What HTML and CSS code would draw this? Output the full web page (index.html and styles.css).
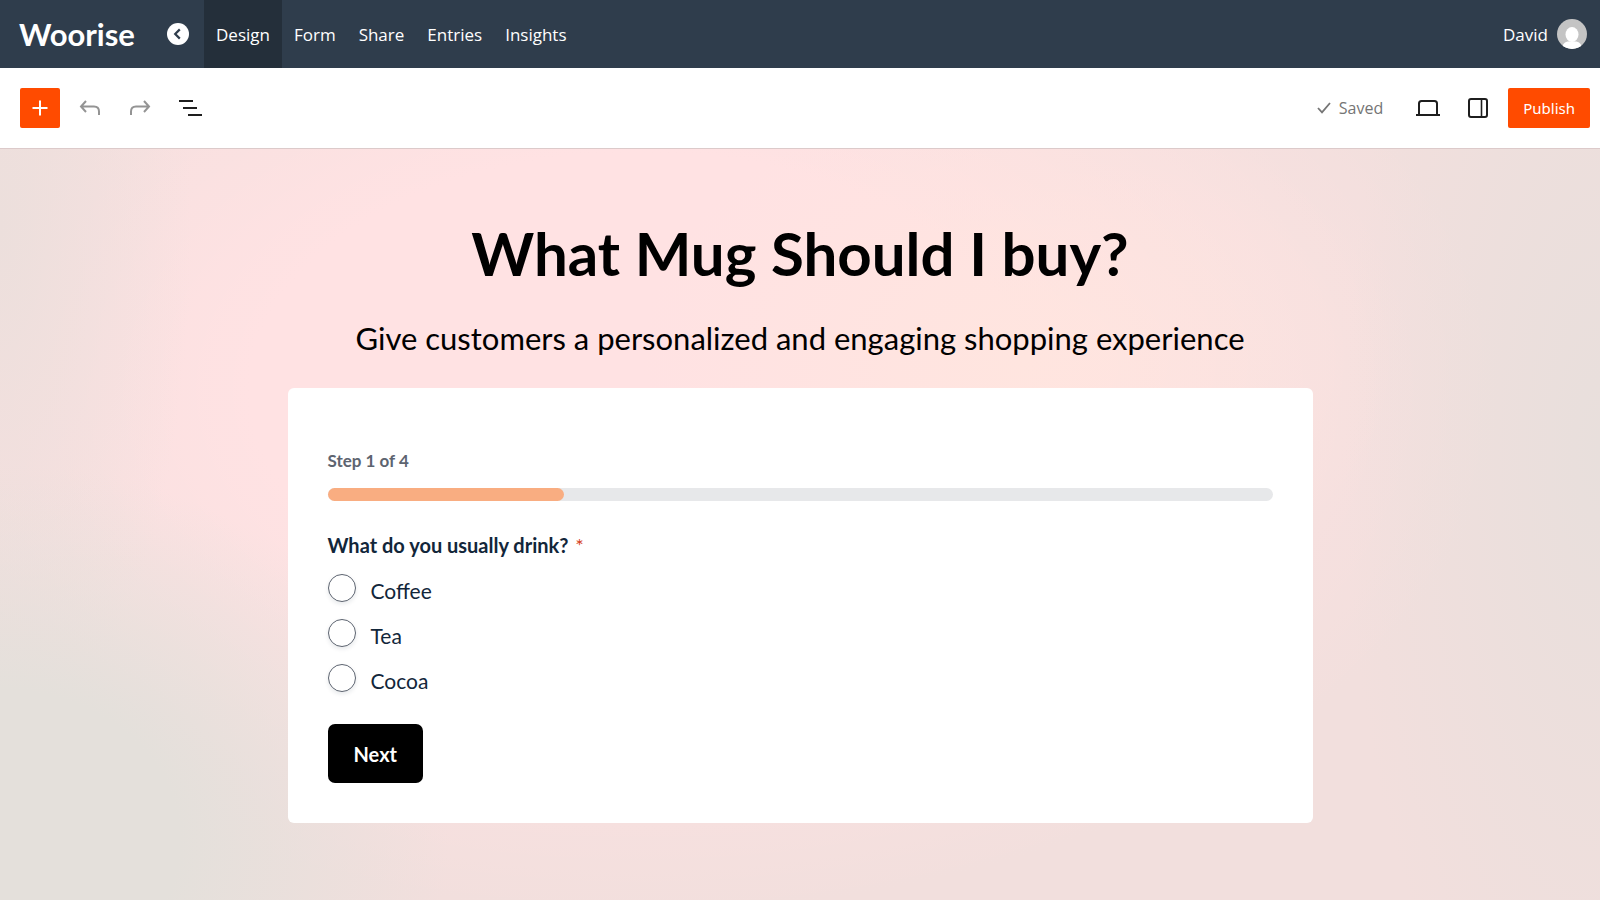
FILE: index.html
```html
<!DOCTYPE html>
<html lang="en">
<head>
  <meta charset="UTF-8">
  <meta name="viewport" content="width=device-width, initial-scale=1.0">
  <title>Woorise - Design</title>
  <link rel="stylesheet" href="styles.css">
</head>
<body>
  <header class="topbar">
    <a href="#" class="logo">Woorise</a>
    <a href="#" class="back" aria-label="Back">
      <svg width="22" height="22" viewBox="0 0 22 22"><circle cx="11" cy="11" r="11" fill="#fff"/><path d="M12.8 6.4 8.2 11l4.600 4.600" fill="none" stroke="#2f3d4c" stroke-width="2.200"/></svg>
    </a>
    <nav class="menu">
      <a href="#" class="active">Design</a>
      <a href="#">Form</a>
      <a href="#">Share</a>
      <a href="#">Entries</a>
      <a href="#">Insights</a>
    </nav>
    <a href="#" class="user">
      David
      <svg width="30" height="30" viewBox="0 0 30 30">
        <clipPath id="avatar"><circle cx="15" cy="15" r="15"/></clipPath>
        <g clip-path="url(#avatar)">
          <rect width="30" height="30" fill="#c4c4c4"/>
          <ellipse cx="15" cy="15.500" rx="6.500" ry="7.500" fill="#fff"/>
          <path d="M5 30c0-5 3-7.500 7-7.500h6c4 0 7 2.500 7 7.500z" fill="#fff"/>
        </g>
      </svg>
    </a>
  </header>

  <div class="toolbar">
    <button type="button" class="add" aria-label="Add block">
      <svg width="16" height="16" viewBox="0 0 16 16"><path d="M8 0.500v15M0.500 8h15" stroke="#fff" stroke-width="2"/></svg>
    </button>
    <button type="button" class="tool" aria-label="Undo">
      <svg width="22" height="16" viewBox="0 0 22 16" fill="none" stroke="#949494" stroke-width="2"><path d="M7 1 2 6.500 7 12M2 6.500h13c3.300 0 5 1.700 5 5V15"/></svg>
    </button>
    <button type="button" class="tool" aria-label="Redo">
      <svg width="22" height="16" viewBox="0 0 22 16" fill="none" stroke="#949494" stroke-width="2"><path d="M15 1l5 5.500L15 12M20 6.500H7c-3.300 0-5 1.700-5 5V15"/></svg>
    </button>
    <button type="button" class="tool" aria-label="List view">
      <svg width="24" height="18" viewBox="0 0 24 18" stroke="#1e1e1e" stroke-width="2"><path d="M1 2h14M5 9h14M10 16h14"/></svg>
    </button>
    <div class="actions">
      <span class="saved">
        <svg width="14" height="12" viewBox="0 0 14 12" fill="none" stroke="#757575" stroke-width="1.800"><path d="M1 6l4 4.300L13 1"/></svg>
        Saved
      </span>
      <button type="button" class="tool" aria-label="Preview">
        <svg width="26" height="18" viewBox="0 0 26 18" fill="none" stroke="#1e1e1e" stroke-width="2"><path d="M4 15V4.500Q4 2 6.500 2h13Q22 2 22 4.500V15M1 16h24"/></svg>
      </button>
      <button type="button" class="tool" aria-label="Settings">
        <svg width="20" height="20" viewBox="0 0 20 20" fill="none" stroke="#1e1e1e"><rect x="1" y="1" width="18" height="18" rx="2" stroke-width="2"/><path d="M13.500 1v18" stroke-width="1.600"/></svg>
      </button>
      <button type="button" class="publish">Publish</button>
    </div>
  </div>

  <main class="canvas">
    <h1>What Mug Should I buy?</h1>
    <p class="subtitle">Give customers a personalized and engaging shopping experience</p>

    <form class="card">
      <div class="step">Step 1 of 4</div>
      <div class="progress"><div class="progress-bar" style="width: 25%"></div></div>

      <fieldset>
        <legend>What do you usually drink? <span class="required">*</span></legend>
        <label class="option"><input type="radio" name="drink"> <span>Coffee</span></label>
        <label class="option"><input type="radio" name="drink"> <span>Tea</span></label>
        <label class="option"><input type="radio" name="drink"> <span>Cocoa</span></label>
      </fieldset>

      <button type="button" class="next">Next</button>
    </form>
  </main>
</body>
</html>
```

FILE: styles.css
```css
* {
  box-sizing: border-box;
}

body {
  margin: 0;
  min-height: 100vh;
  display: flex;
  flex-direction: column;
  font-family: "Noto Sans", "Open Sans", sans-serif;
}

button {
  border: none;
  padding: 0;
  font-family: inherit;
  cursor: pointer;
}

a {
  color: #fff;
  text-decoration: none;
}

svg {
  display: block;
}

.topbar {
  height: 68px;
  display: flex;
  align-items: center;
  padding: 0 13px 0 19px;
  background: #2f3d4c;
  font-family: "Open Sans", sans-serif;
  font-size: 17px;
}

.logo {
  width: 148px;
  font-family: Lato, sans-serif;
  font-size: 31px;
  font-weight: 700;
}

.menu {
  display: flex;
  gap: 1px;
  align-self: stretch;
  margin-left: 15px;
}

.menu a {
  display: flex;
  align-items: center;
  padding: 0 11px;
}

.menu a.active {
  padding: 0 12px;
  background: #242f3a;
}

.user {
  display: flex;
  align-items: center;
  gap: 9px;
  margin-left: auto;
}

.toolbar {
  height: 81px;
  display: flex;
  align-items: center;
  padding: 0 10px 0 20px;
  background: #fff;
  border-bottom: 1px solid #dccaca;
}

.add {
  width: 40px;
  height: 40px;
  margin-right: 5px;
  display: grid;
  place-items: center;
  background: #ff4b00;
  border-radius: 2px;
}

.tool {
  width: 50px;
  height: 40px;
  display: grid;
  place-items: center;
  background: none;
}

.actions {
  display: flex;
  align-items: center;
  margin-left: auto;
}

.saved {
  display: flex;
  align-items: center;
  gap: 8px;
  margin-right: 20px;
  color: #757575;
  font-family: "Open Sans", sans-serif;
  font-size: 16px;
}

.publish {
  height: 40px;
  margin-left: 5px;
  padding: 0 15px;
  background: #ff4b00;
  border-radius: 2px;
  color: #fff;
  font-size: 15px;
}

.canvas {
  flex: 1;
  padding: 64px 20px 76px;
  background:
    radial-gradient(ellipse 28% 50% at 0% 92%, #e4e0db 40%, rgba(228, 224, 219, 0)),
    radial-gradient(ellipse 16% 90% at 100% 40%, #e8dfdc, rgba(232, 223, 220, 0)),
    radial-gradient(ellipse 12% 70% at 0% 10%, #ecdfdc, rgba(236, 223, 220, 0)),
    radial-gradient(ellipse 24% 36% at 64% 28%, #ffe5df, rgba(255, 229, 223, 0)),
    radial-gradient(ellipse 54% 70% at 40% 32%, #ffe2e3 45%, rgba(255, 226, 227, 0)),
    #f2dfdd;
  font-family: Lato, "Open Sans", sans-serif;
}

h1 {
  margin: 0;
  font-size: 60px;
  line-height: 80px;
  font-weight: 700;
  text-align: center;
}

.subtitle {
  margin: 20px 0 25px;
  font-size: 31px;
  line-height: 50px;
  text-align: center;
}

.card {
  max-width: 1025px;
  margin: 0 auto;
  padding: 59px 40px 40px;
  background: #fff;
  border-radius: 6px;
  color: #12263a;
  font-size: 21px;
}

.step {
  color: #5d6470;
  font-size: 17px;
  line-height: 28px;
  font-weight: 700;
}

.progress {
  height: 13px;
  margin: 13px 0 28px;
  background: #e7e8ea;
  border-radius: 7px;
}

.progress-bar {
  height: 100%;
  background: #f9ad81;
  border-radius: 7px;
}

fieldset {
  margin: 0;
  padding: 0;
  border: none;
}

legend {
  padding: 0;
  margin-bottom: 12px;
  font-size: 20px;
  line-height: 33px;
  font-weight: 700;
}

.required {
  margin-left: 2px;
  color: #d63e1d;
  font-weight: 400;
}

.option {
  display: flex;
  align-items: flex-start;
  gap: 15px;
  height: 45px;
  line-height: 34px;
}

.option input {
  appearance: none;
  width: 28px;
  height: 28px;
  margin: 0;
  border: 1px solid #5d6470;
  border-radius: 50%;
  background: #fff;
  box-shadow: 0 2px 4px rgba(18, 38, 58, 0.1);
}

.next {
  display: block;
  height: 59px;
  margin-top: 15px;
  padding: 0 26px;
  background: #000;
  border-radius: 7px;
  color: #fff;
  font-size: 20px;
  font-weight: 700;
}
```
